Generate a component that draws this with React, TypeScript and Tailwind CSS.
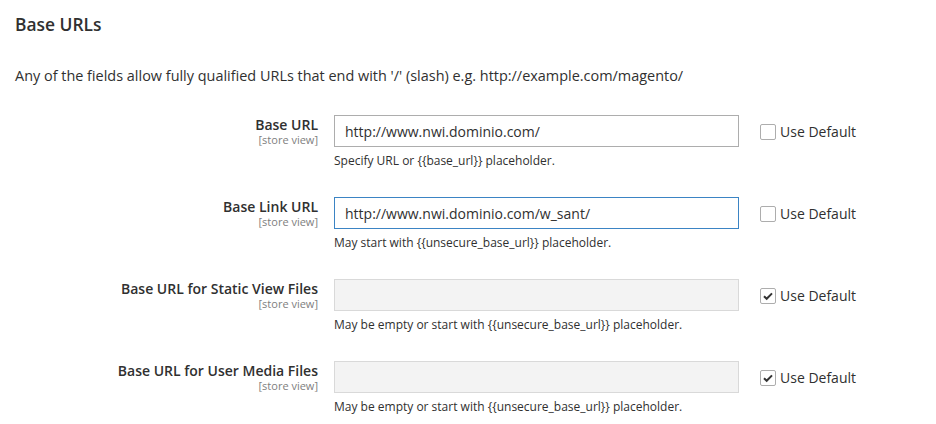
import React from "react";

type Row = {
  label: string;
  value: string;
  note: string;
  checked: boolean;
  focused?: boolean;
};

const rows: Row[] = [
  { label: "Base URL", value: "http://www.nwi.dominio.com/", note: "Specify URL or {{base_url}} placeholder.", checked: false },
  { label: "Base Link URL", value: "http://www.nwi.dominio.com/w_sant/", note: "May start with {{unsecure_base_url}} placeholder.", checked: false, focused: true },
  { label: "Base URL for Static View Files", value: "", note: "May be empty or start with {{unsecure_base_url}} placeholder.", checked: true },
  { label: "Base URL for User Media Files", value: "", note: "May be empty or start with {{unsecure_base_url}} placeholder.", checked: true },
];

function Check({ checked }: { checked: boolean }) {
  return (
    <span className="flex h-[16px] w-[16px] items-center justify-center rounded-[2px] border border-[#adadad] bg-white">
      {checked && (
        <svg width="12" height="12" viewBox="0 0 12 12">
          <path d="M2 6.2 L4.7 8.8 L10 3.4" fill="none" stroke="#333" strokeWidth="2" />
        </svg>
      )}
    </span>
  );
}

export default function App() {
  return (
    <div
      className="min-h-[424px] w-[936px] bg-white pl-[15px] text-[#303030]"
      style={{ fontFamily: '"Open Sans", sans-serif' }}
    >
      <h2 className="pt-[12px] text-[17.4px] font-semibold leading-[24px]">Base URLs</h2>
      <p className="mt-[30px] text-[14.45px] leading-[20px]">
        Any of the fields allow fully qualified URLs that end with '/' (slash) e.g. http://example.com/magento/
      </p>
      <div className="mt-[29px] flex flex-col gap-[28px]">
        {rows.map((r) => (
          <div key={r.label} className="flex items-start">
            <div className="flex w-[303px] flex-col items-end pt-[1px]">
              <span className="text-[14px] font-semibold leading-[18px]">{r.label}</span>
              <span className="text-[11px] leading-[12px] text-[#808080]">[store view]</span>
            </div>
            <div className="ml-[16px] flex w-[405px] flex-col">
              <div
                className={
                  r.value === ""
                    ? "h-[32px] w-full border border-[#d9d9d9] bg-[#f3f3f3]"
                    : r.focused
                    ? "flex h-[32px] w-full items-center border border-[#3b84c4] bg-white px-[10px] text-[14px]"
                    : "flex h-[32px] w-full items-center border border-[#adadad] bg-white px-[10px] text-[14px]"
                }
              >
                {r.value}
              </div>
              <span className="mt-[5px] text-[12px] leading-[17px] text-[#303030]">{r.note}</span>
            </div>
            <div className="ml-[21px] flex h-[32px] items-center gap-[4px] pt-[1px]">
              <Check checked={r.checked} />
              <span className="text-[14px] leading-[20px]">Use Default</span>
            </div>
          </div>
        ))}
      </div>
    </div>
  );
}
